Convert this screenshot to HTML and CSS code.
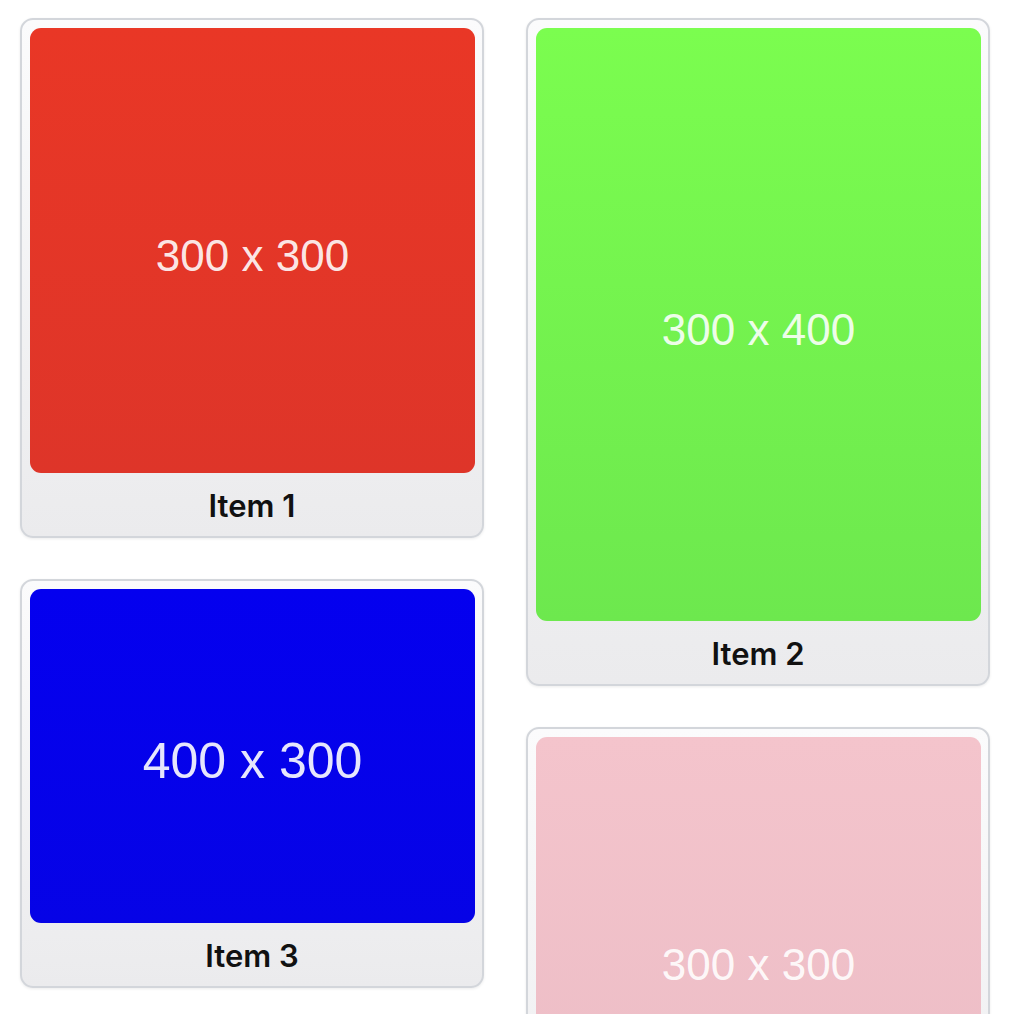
FILE: index.html
```html
<!DOCTYPE html>
<html>
<head>
<meta charset="utf-8">
<link rel="stylesheet" href="styles.css">
</head>
<body>
<div class="masonry">
  <div class="column">
    <div class="card">
      <div class="pic pic-red sq"><span class="dim">300 x 300</span></div>
      <div class="label">Item 1</div>
    </div>
    <div class="card">
      <div class="pic pic-blue wide"><span class="dim dim-lg">400 x 300</span></div>
      <div class="label">Item 3</div>
    </div>
  </div>
  <div class="column">
    <div class="card">
      <div class="pic pic-green tall"><span class="dim">300 x 400</span></div>
      <div class="label">Item 2</div>
    </div>
    <div class="card">
      <div class="pic pic-pink sq"><span class="dim">300 x 300</span></div>
      <div class="label">Item 4</div>
    </div>
  </div>
</div>
</body>
</html>
```

FILE: styles.css
```css
html, body {
  margin: 0;
  padding: 0;
  background: #ffffff;
  overflow: hidden;
}
.masonry {
  display: flex;
  align-items: flex-start;
  gap: 42px;
  padding: 18px 20px;
}
.column {
  display: flex;
  flex-direction: column;
  gap: 41px;
  width: 464px;
}
.card {
  box-sizing: border-box;
  width: 464px;
  border: 2px solid #d3d6db;
  border-radius: 13px;
  padding: 8px 8px 0;
  background: linear-gradient(#fbfbfc, #ebebed);
  box-shadow: 0 1px 3px rgba(0, 0, 0, 0.08);
}
.pic {
  width: 445px;
  border-radius: 11px;
  display: flex;
  align-items: center;
  justify-content: center;
}
.sq { height: 445px; }
.tall { height: 593px; }
.wide { height: 334px; }
.pic-red { background: linear-gradient(#e93726, #de3529); }
.pic-green { background: linear-gradient(#7bfd4f, #6de84e); }
.pic-blue { background: linear-gradient(#0400ef, #0603e6); }
.pic-pink { background: linear-gradient(#f4c4cc, #ebbcc5); }
.dim {
  font-family: "Liberation Sans", Arial, sans-serif;
  font-size: 44px;
  color: rgba(255, 255, 255, 0.9);
  margin-top: 10px;
}
.dim-lg { font-size: 50px; }
.label {
  box-sizing: border-box;
  height: 63px;
  padding-top: 2px;
  display: flex;
  align-items: center;
  justify-content: center;
  font-family: Inter, "Noto Sans", sans-serif;
  font-weight: 600;
  font-size: 31px;
  color: #111111;
}
```
